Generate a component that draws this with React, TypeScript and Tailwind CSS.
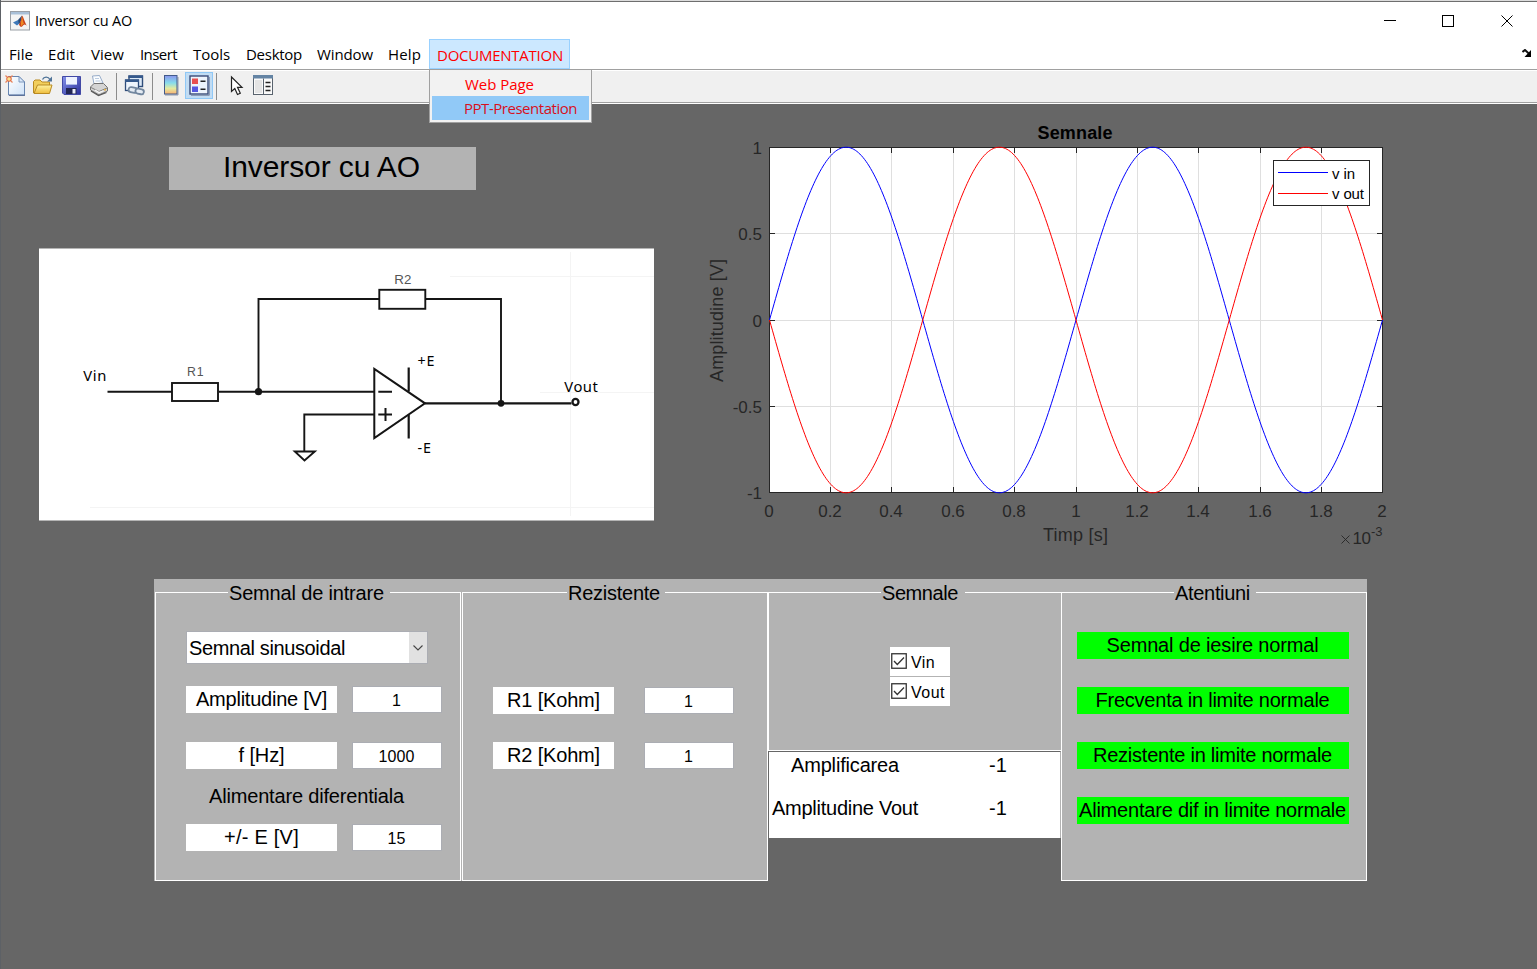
import { useLayoutEffect, useRef, useState, type ReactNode } from "react";
import clsx from "clsx";

const ARIAL = "font-['Liberation_Sans',Arial,sans-serif]";
const SEGOE = "font-['Open_Sans','Noto_Sans',sans-serif]";

/** Single-line text whose tracking is adjusted to fill an exact advance width. */
function FitText({ w, className, children }: { w: number; className?: string; children: string }) {
  const ref = useRef<HTMLSpanElement>(null);
  const [spacing, setSpacing] = useState(0);
  useLayoutEffect(() => {
    if (ref.current) {
      const natural = ref.current.getBoundingClientRect().width;
      setSpacing((w - natural) / children.length);
    }
  }, [w, children]);
  return (
    <span ref={ref} className={clsx("inline-block whitespace-pre", className)} style={{ letterSpacing: spacing }}>
      {children}
    </span>
  );
}

/* ---------- title bar ---------- */

function MatlabIcon() {
  return (
    <svg width="20" height="20" viewBox="0 0 20 20">
      <rect x="0.5" y="0.5" width="19" height="18.5" fill="#f4f4f4" stroke="#9a9fa6" />
      <rect x="1" y="1" width="18" height="2.5" fill="#a9c0d8" />
      <path d="M3 11.5 L8 9 L10 12 L7 14.5 Z" fill="#3f78b8" />
      <path d="M8 9 L12 4.5 L11 10 L9 13 Z" fill="#274a77" />
      <path d="M12 4.5 C13.5 6 15 12 17 15 C15 13 14 13 12.500 15 C11.500 16.500 10 16 9 13.500 C10.500 11.500 11.200 8 12 4.500 Z" fill="#c8401c" />
      <path d="M12 5.500 C12.800 8 13 11 14 13 C12.500 13 12 15 11 15.300 C10.500 13 11.500 9 12 5.500 Z" fill="#f08a24" />
    </svg>
  );
}

function TitleBar() {
  return (
    <header className="flex h-[37px] shrink-0 items-center bg-white pl-[9px]">
      <MatlabIcon />
      <FitText w={97} className="ml-[5px] text-[14.500px] leading-[20px]">Inversor cu AO</FitText>
      <svg className="mr-[23px] ml-auto" width="130" height="14" viewBox="1384 13 130 14" shapeRendering="crispEdges">
        <path d="M1384 19.5H1396" stroke="#000" />
        <rect x="1442.5" y="14.5" width="11" height="11" fill="none" stroke="#000" />
        <path d="M1501.500 14.500L1512.500 25.500M1512.500 14.500L1501.500 25.500" stroke="#000" shapeRendering="auto" />
      </svg>
    </header>
  );
}

/* ---------- menu bar ---------- */

const MENUS = [
  { label: "File", w: 24, gap: "ml-[8px]" },
  { label: "Edit", w: 27, gap: "ml-[15px]" },
  { label: "View", w: 33, gap: "ml-[16px]" },
  { label: "Insert", w: 37, gap: "ml-[16px]" },
  { label: "Tools", w: 37, gap: "ml-[16px]" },
  { label: "Desktop", w: 56, gap: "ml-[16px]" },
  { label: "Window", w: 56, gap: "ml-[15px]" },
  { label: "Help", w: 33, gap: "ml-[15px]" },
];

function MenuBar() {
  return (
    <nav className="flex h-[30px] shrink-0 items-stretch bg-white text-[15px] leading-[31px]">
      {MENUS.map((m) => (
        <FitText key={m.label} w={m.w} className={m.gap}>{m.label}</FitText>
      ))}
      <div className="relative ml-[8px] h-[30px] w-[141px] border border-[#99d1ff] bg-[#cce8ff] pl-[7px] text-[#ff0000]">
        <FitText w={126} className="leading-[28px]">DOCUMENTATION</FitText>
        <div className="absolute top-[30px] -left-px z-10 flex h-[53px] w-[163px] flex-col border border-t-0 border-[#a0a0a0] bg-[#f2f2f2] px-[2px] pt-[2px]">
          <div className="h-[24px] pl-[33px] leading-[25px]">
            <FitText w={69}>Web Page</FitText>
          </div>
          <div className="h-[24px] bg-[#91c9f7] pl-[32px] leading-[25px] text-[#d8101c]">
            <FitText w={113}>PPT-Presentation</FitText>
          </div>
        </div>
      </div>
      <svg className="mt-[10px] mr-[5px] ml-auto" width="10" height="9" viewBox="0 0 10 9">
        <path d="M0.500 3 L3 1 L6.500 4.200" fill="none" stroke="#111" strokeWidth="2" />
        <path d="M9 1V8H2.500Z" fill="#000" />
      </svg>
    </nav>
  );
}

/* ---------- toolbar ---------- */

function Tool({ x, w, children, active }: { x: number; w: number; children: ReactNode; active?: boolean }) {
  return (
    <svg width={w} height="31" viewBox={`${x} 71 ${w} 31`} className="shrink-0">
      {active && <rect x="185.500" y="72.500" width="27" height="26" fill="#c1dcf3" stroke="#90c8f6" />}
      {children}
    </svg>
  );
}

function Separator({ x, w }: { x: number; w: number }) {
  return (
    <Tool x={x} w={w}>
      <path d={`M${x + 0.5} 73V100`} stroke="#8c8c8c" />
    </Tool>
  );
}

function Toolbar() {
  return (
    <div className="flex h-[31px] shrink-0 bg-[#f0f0f0]">
      <svg width="0" height="0" className="absolute">
        <defs>
          <linearGradient id="page" x1="0" y1="0" x2="1" y2="1"><stop offset="0" stopColor="#fff" /><stop offset="1" stopColor="#cfe2f7" /></linearGradient>
          <linearGradient id="folder" x1="0" y1="0" x2="0" y2="1"><stop offset="0" stopColor="#fff3a0" /><stop offset="1" stopColor="#eebc3c" /></linearGradient>
          <linearGradient id="disk" x1="0" y1="0" x2="1" y2="1"><stop offset="0" stopColor="#8592ea" /><stop offset="1" stopColor="#2a2f9c" /></linearGradient>
          <linearGradient id="bar" x1="0" y1="0" x2="0" y2="1"><stop offset="0" stopColor="#8a94ec" /><stop offset="0.400" stopColor="#86dcec" /><stop offset="0.700" stopColor="#e4eaa0" /><stop offset="1" stopColor="#f8b070" /></linearGradient>
        </defs>
      </svg>
      <Tool x={1} w={30}>
        <path d="M8.500 76.500H19L24.500 82V95H8.500Z" fill="url(#page)" stroke="#6785b0" />
        <path d="M9 95.300H25" stroke="#4a618c" />
        <path d="M19 76.500V82H24.500Z" fill="#dbe8f8" stroke="#6785b0" strokeWidth="0.800" />
        <path d="M5.500 75.500L12.500 82.500M12.500 75.500L5.500 82.500" stroke="#e8835a" strokeWidth="1.200" />
        <circle cx="9" cy="79" r="2.300" fill="#fbe08a" stroke="#dd5a36" />
      </Tool>
      <Tool x={31} w={28}>
        <path d="M33.500 93V81.500L35 80H40L42 82H49.500V85" fill="#f2cf5c" stroke="#b98a22" />
        <path d="M34 93.500L37.500 85H52L49.500 93.500Z" fill="url(#folder)" stroke="#b98a22" />
        <path d="M42.500 79.500C44 76.500 48 76 50 79.500" fill="none" stroke="#4f7398" strokeWidth="1.300" />
        <path d="M52 76.500V81.500H47Z" fill="#4f7398" />
      </Tool>
      <Tool x={59} w={28}>
        <path d="M62.500 76.500H80.500V94.500H64L62.500 93Z" fill="url(#disk)" stroke="#4249a5" />
        <rect x="66" y="77" width="11" height="8" fill="#eef2ff" />
        <path d="M66 84.500H77" stroke="#aebbe8" />
        <rect x="66" y="88" width="10.500" height="6" fill="#222653" />
        <rect x="72.500" y="89" width="3" height="4.500" fill="#eceefa" />
      </Tool>
      <Tool x={87} w={29}>
        <path d="M94 84L92.500 76L99.500 75.500L103 83Z" fill="#fbfdff" stroke="#8ba3c3" strokeWidth="0.900" />
        <path d="M95 78.500H99M95.500 81H100.500" stroke="#a9bed8" strokeWidth="0.800" />
        <path d="M90.500 87L94 83.500H103.500L107.500 87.500V91L99 95L90.500 90Z" fill="#d4d4d4" stroke="#737373" />
        <path d="M91 87.500L99 91.500L107 88" fill="none" stroke="#818181" />
        <path d="M91 91L98.500 95.500L106.500 92.500" fill="none" stroke="#595959" strokeWidth="1.300" />
        <path d="M95 90L99 92.500L103.500 90.800" stroke="#f8f8f8" strokeWidth="1.200" fill="none" />
        <circle cx="105" cy="89.800" r="1" fill="#e6b044" />
      </Tool>
      <Separator x={116} w={6} />
      <Tool x={122} w={30}>
        <rect x="129" y="76" width="13.500" height="10.500" fill="#dce9f7" stroke="#2f4d7a" strokeWidth="1.400" />
        <rect x="128.500" y="75.500" width="14.500" height="2.500" fill="#35598c" />
        <rect x="125.500" y="80" width="13" height="10.500" fill="#edf4fc" stroke="#2f4d7a" strokeWidth="1.300" />
        <rect x="125" y="79.500" width="14" height="2.500" fill="#35598c" />
        <rect x="128.500" y="87.500" width="9" height="5" rx="2.500" fill="#e4ebf3" stroke="#72879f" strokeWidth="1.800" transform="rotate(12 133 90)" />
        <rect x="135.500" y="89" width="8.500" height="5" rx="2.500" fill="#e4ebf3" stroke="#72879f" strokeWidth="1.800" transform="rotate(12 140 91)" />
      </Tool>
      <Separator x={152} w={6} />
      <Tool x={158} w={27}>
        <path d="M165 95H178V77" fill="none" stroke="#8e98a8" />
        <rect x="164.500" y="75.500" width="12.500" height="18.500" fill="url(#bar)" stroke="#425a8a" />
      </Tool>
      <Tool x={185} w={31} active>
        <rect x="190" y="76" width="18" height="18" fill="#edf4fc" stroke="#3a4a78" strokeWidth="1.400" />
        <path d="M191 95.300H209.300V77" fill="none" stroke="#7d8aa5" />
        <rect x="192" y="78.500" width="6" height="5.500" fill="#e85050" />
        <rect x="192" y="86.500" width="6" height="5.500" fill="#5558e0" />
        <path d="M200.500 81.200H205.500M200.500 89.200H205.500" stroke="#222" strokeWidth="1.600" />
      </Tool>
      <Separator x={216} w={10} />
      <Tool x={226} w={24}>
        <path d="M231.500 77V91.500L234.800 88.500L237.500 94.500L240.300 93.200L237.500 87.300H242Z" fill="#fff" stroke="#222" strokeWidth="1.200" />
      </Tool>
      <Tool x={250} w={30}>
        <rect x="253.500" y="75.500" width="19" height="19" fill="#fafafa" stroke="#59636e" />
        <rect x="253" y="75" width="20" height="3.500" fill="#6484a4" />
        <path d="M263.500 78.500V94.500" stroke="#59636e" />
        <rect x="255" y="80" width="7" height="13" fill="#e4e4e4" />
        <path d="M265.500 82.500H270.500M265.500 86.500H270.500M265.500 90.500H270.500" stroke="#222" strokeWidth="1.500" />
      </Tool>
    </div>
  );
}

/* ---------- circuit drawing ---------- */

function Circuit() {
  return (
    <svg width="615" height="273" viewBox="39 248 615 273" className="block bg-white">
      <path d="M39 248.500H654M39 520.500H654" stroke="#b5b5b5" />
      <g stroke="#f4f4f4">
        <path d="M450 276.500H654M540 392.500H654M90 507.500H654M570.500 252V516" />
      </g>
      <g fill="none" stroke="#151515" strokeWidth="1.900">
        <path d="M107.500 391.700H172M219 391.700H374M258.500 391.700V299H379M426 299H501V403.300" />
        <rect x="172" y="383" width="46" height="18" />
        <rect x="379.300" y="289.800" width="46" height="19" />
        <path d="M374 414.500H304.300V451.500" />
        <path d="M294.800 451.500H314.800L304.500 460.500Z" />
        <path d="M374.300 369V438L425 403.300Z" strokeWidth="2" />
        <path d="M408.700 367.500V391.500M408.700 415V438.500" strokeWidth="2.200" />
        <path d="M378.300 391.700H392M378.300 414.500H392M385.500 408V421" strokeWidth="2" />
        <path d="M425 403.300H571.500" strokeWidth="2.200" />
        <ellipse cx="575.500" cy="402" rx="3" ry="3.100" strokeWidth="2.300" />
      </g>
      <circle cx="258.500" cy="391.700" r="3.600" fill="#151515" />
      <circle cx="501" cy="403.300" r="3.400" fill="#151515" />
      <g className="font-['Noto_Sans',sans-serif]" fontSize="14.800" fill="#000">
        <text x="83.300" y="381.300" textLength="23">Vin</text>
        <text x="564.300" y="392" textLength="33.500">Vout</text>
        <text x="417.500" y="366" fontSize="14.300" textLength="17">+E</text>
        <text x="417.500" y="453.300" fontSize="14.300" textLength="13.500">-E</text>
      </g>
      <g className={ARIAL} fill="#555">
        <text x="187" y="375.700" fontSize="12.300" textLength="16.500">R1</text>
        <text x="394.300" y="284" fontSize="13.300" textLength="17">R2</text>
      </g>
    </svg>
  );
}

/* ---------- plot ---------- */

const X_TICKS = [
  ["0", 769], ["0.2", 830], ["0.4", 891], ["0.6", 953], ["0.8", 1014], ["1", 1076],
  ["1.2", 1137], ["1.4", 1198], ["1.6", 1260], ["1.8", 1321], ["2", 1382],
] as const;
const Y_TICKS = [["1", 147], ["0.5", 233], ["0", 320], ["-0.5", 406], ["-1", 492]] as const;

function sine(sign: number) {
  let d = "";
  for (let i = 0; i <= 400; i++) {
    const x = 769.5 + (613 * i) / 400;
    const y = 320 - sign * 172.8 * Math.sin((4 * Math.PI * i) / 400);
    d += `${i ? "L" : "M"}${x.toFixed(2)} ${y.toFixed(2)}`;
  }
  return d;
}

function Plot() {
  return (
    <svg width="710" height="450" viewBox="690 110 710 450" className={clsx("block", ARIAL)}>
      <rect x="769.500" y="147.500" width="613" height="345" fill="#fff" />
      <g stroke="#dfdfdf" shapeRendering="crispEdges">
        {X_TICKS.slice(1, -1).map(([l, x]) => <path key={l} d={`M${x + 0.5} 148V492`} />)}
        {Y_TICKS.slice(1, -1).map(([l, y]) => <path key={l} d={`M770 ${y + 0.5}H1382`} />)}
      </g>
      <g stroke="#262626" fill="none" shapeRendering="crispEdges">
        <rect x="769.500" y="147.500" width="613" height="345" />
        {X_TICKS.map(([l, x]) => <path key={l} d={`M${x + 0.5} 148V153M${x + 0.5} 492V487`} />)}
        {Y_TICKS.map(([l, y]) => <path key={l} d={`M770 ${y + 0.5}H775M1382 ${y + 0.5}H1377`} />)}
      </g>
      <path d={sine(1)} fill="none" stroke="#0000ff" />
      <path d={sine(-1)} fill="none" stroke="#ff0000" />
      <rect x="1273.500" y="160.500" width="96" height="45" fill="#fff" stroke="#262626" />
      <path d="M1278 172.500H1328" stroke="#0000ff" />
      <path d="M1278 193.500H1328" stroke="#ff0000" />
      <g fontSize="15" fill="#000">
        <text x="1332" y="179" textLength="23">v in</text>
        <text x="1332" y="199" textLength="32">v out</text>
      </g>
      <text x="1037.500" y="139" fontSize="18" fontWeight="bold" textLength="75">Semnale</text>
      <g fill="#262626" fontSize="17">
        {X_TICKS.map(([l, x]) => <text key={l} x={x} y="517" textAnchor="middle">{l}</text>)}
        {Y_TICKS.map(([l, y]) => <text key={l} x="762" y={y + 6.7} textAnchor="end">{l}</text>)}
        <text x="1043" y="541" fontSize="18" textLength="65">Timp [s]</text>
        <text transform="translate(722.800 382) rotate(-90)" fontSize="18" textLength="123">Amplitudine [V]</text>
        <path d="M1341.500 535.500L1349.500 543.500M1349.500 535.500L1341.500 543.500" stroke="#262626" strokeWidth="0.900" />
        <text x="1352.500" y="544" textLength="18.500">10</text>
        <text x="1371" y="536" fontSize="13" textLength="11.500">-3</text>
      </g>
    </svg>
  );
}

/* ---------- control panels ---------- */

function Legend({ className, w, children }: { className: string; w: number; children: string }) {
  return (
    <h2 className={clsx("-mt-[14px] h-[27px] shrink-0 bg-[#b3b3b3] pl-px leading-[28px]", className)}>
      <FitText w={w}>{children}</FitText>
    </h2>
  );
}

function Label({ className, w, children }: { className: string; w: number; children: string }) {
  return (
    <div className={clsx("h-[27px] bg-white text-center leading-[27px]", className)}>
      <FitText w={w}>{children}</FitText>
    </div>
  );
}

function Edit({ w, children }: { w: number; children: string }) {
  return (
    <div className="h-[27px] w-[90px] border border-[#abadb3] bg-white pr-px text-center text-[16px] leading-[27px]">
      <FitText w={w}>{children}</FitText>
    </div>
  );
}

function InputPanel() {
  return (
    <section className="h-[302px] w-[307px] bg-[#b3b3b3] pt-[13px] pl-px">
      <div className="flex h-[289px] w-[306px] flex-col border border-white">
        <Legend className="ml-[72px] w-[162px]" w={155}>Semnal de intrare</Legend>
        <div className="mt-[25px] ml-[30px] flex h-[33px] w-[242px] shrink-0 border border-[#abadb3] bg-white">
          <FitText w={158} className="pl-[2px] leading-[32px]">Semnal sinusoidal</FitText>
          <div className="ml-auto flex w-[18px] items-center justify-center bg-[#e1e1e1]">
            <svg width="10" height="6" viewBox="0 0 10 6"><path d="M0.500 0.500L5 5L9.500 0.500" fill="none" stroke="#444" strokeWidth="1.100" /></svg>
          </div>
        </div>
        <div className="mt-[22px] ml-[30px] flex gap-[15px]">
          <Label className="w-[151px]" w={131}>Amplitudine [V]</Label>
          <Edit w={9}>1</Edit>
        </div>
        <div className="mt-[29px] ml-[30px] flex gap-[15px]">
          <Label className="w-[151px]" w={46}>f [Hz]</Label>
          <Edit w={36}>1000</Edit>
        </div>
        <div className="mt-[13px] ml-[53px] h-[28px] leading-[28px]">
          <FitText w={195}>Alimentare diferentiala</FitText>
        </div>
        <div className="mt-[14px] ml-[30px] flex gap-[15px]">
          <Label className="w-[151px]" w={75}>+/- E [V]</Label>
          <Edit w={18}>15</Edit>
        </div>
      </div>
    </section>
  );
}

function ResistorPanel() {
  return (
    <section className="h-[302px] w-[307px] bg-[#b3b3b3] pt-[13px] pl-px">
      <div className="flex h-[289px] w-[306px] flex-col border border-white">
        <Legend className="ml-[104px] w-[98px]" w={92}>Rezistente</Legend>
        <div className="mt-[81px] ml-[30px] flex gap-[30px]">
          <Label className="w-[121px]" w={93}>R1 [Kohm]</Label>
          <Edit w={9}>1</Edit>
        </div>
        <div className="mt-[28px] ml-[30px] flex gap-[30px]">
          <Label className="w-[121px]" w={93}>R2 [Kohm]</Label>
          <Edit w={9}>1</Edit>
        </div>
      </div>
    </section>
  );
}

function Check({ w, children }: { w: number; children: string }) {
  return (
    <div className="flex h-[29px] w-[60px] bg-white pl-px text-[16px] leading-[31px]">
      <svg className="mt-[6px]" width="16" height="16" viewBox="0 0 16 16">
        <rect x="0.750" y="0.750" width="14.500" height="14.500" fill="#fff" stroke="#333" strokeWidth="1.300" />
        <path d="M3 8L6.300 11.500L13 4.500" fill="none" stroke="#333" strokeWidth="1.300" />
      </svg>
      <FitText w={w} className="ml-[4px]">{children}</FitText>
    </div>
  );
}

function SignalPanel() {
  return (
    <div className="flex h-[302px] w-[293px] flex-col">
      <section className="h-[172px] bg-[#b3b3b3] pt-[13px]">
        <div className="flex h-[159px] flex-col border-y border-l border-white">
          <Legend className="ml-[112px] w-[84px]" w={76}>Semnale</Legend>
          <div className="mt-[41px] ml-[121px] flex flex-col gap-px">
            <Check w={24}>Vin</Check>
            <Check w={34}>Vout</Check>
          </div>
        </div>
      </section>
      <section className="grid h-[87px] grid-cols-[220px_1fr] grid-rows-[43px_43px] justify-items-start border-t border-r border-l border-t-[#666] border-r-[#b3b3b3] border-l-[#666] bg-white leading-[27px]">
        <FitText w={108} className="ml-[22px]">Amplificarea</FitText>
        <FitText w={18}>-1</FitText>
        <FitText w={146} className="ml-[3px]">Amplitudine Vout</FitText>
        <FitText w={18}>-1</FitText>
      </section>
    </div>
  );
}

const WARNINGS = [
  { text: "Semnal de iesire normal", w: 212 },
  { text: "Frecventa in limite normale", w: 234 },
  { text: "Rezistente in limite normale", w: 239 },
  { text: "Alimentare dif in limite normale", w: 267 },
];

function WarningPanel() {
  return (
    <section className="h-[302px] w-[306px] bg-[#b3b3b3] pt-[13px]">
      <div className="flex h-[289px] flex-col border border-white">
        <Legend className="ml-[112px] w-[82px]" w={75}>Atentiuni</Legend>
        <div className="mt-[26px] ml-[15px] flex flex-col gap-[28px]">
          {WARNINGS.map((m) => (
            <div key={m.text} className="h-[27px] w-[272px] bg-[#00ff00] pr-px text-center leading-[27px]">
              <FitText w={m.w}>{m.text}</FitText>
            </div>
          ))}
        </div>
      </div>
    </section>
  );
}

export default function App() {
  return (
    <div className={clsx("flex h-[969px] w-[1537px] flex-col overflow-hidden border-l border-[#5d6166] bg-[#666] text-black", SEGOE)}>
      <div className="h-[2px] shrink-0 border-b border-[#6e6e6e] bg-[#dcdcdc]" />
      <TitleBar />
      <MenuBar />
      <div className="h-[2px] shrink-0 border-t border-[#a0a0a0] bg-white" />
      <Toolbar />
      <div className="h-[2px] shrink-0 border-t border-[#a0a0a0] bg-white" />
      <main className={clsx("flex flex-1 flex-col text-[20px]", ARIAL)}>
        <div className="flex h-[475px] shrink-0">
          <div className="flex w-[651px] shrink-0 flex-col pl-[38px]">
            <h1 className="mt-[43px] mb-[58px] ml-[130px] h-[43px] w-[307px] bg-[#b3b3b3] pr-[2px] text-center text-[30px] leading-[40px]">
              <FitText w={197}>Inversor cu AO</FitText>
            </h1>
            <Circuit />
          </div>
          <div className="mt-[6px] ml-[38px] shrink-0">
            <Plot />
          </div>
        </div>
        <div className="ml-[153px] flex">
          <InputPanel />
          <ResistorPanel />
          <SignalPanel />
          <WarningPanel />
        </div>
      </main>
    </div>
  );
}
